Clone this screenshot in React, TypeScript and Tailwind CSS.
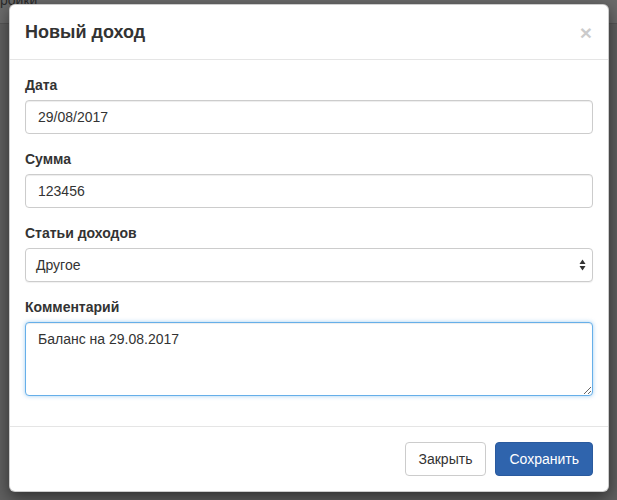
import React from "react";

const font = { fontFamily: '"Liberation Sans", Arial, sans-serif' };

function Field({ label, children }: { label: string; children: React.ReactNode }) {
  return (
    <div className="mb-[15px]">
      <label className="mb-[5px] block text-[14px] font-bold leading-[20px] text-[#333]">{label}</label>
      {children}
    </div>
  );
}

const inputCls =
  "block h-[34px] w-full rounded-[4px] border border-[#ccc] bg-white px-[12px] py-[6px] text-[14px] leading-[20px] text-[#333] shadow-[inset_0_1px_1px_rgba(0,0,0,0.075)] outline-none";

export default function App() {
  return (
    <div className="relative h-[500px] w-[617px] overflow-hidden bg-[#5f5f5f]" style={font}>
      {/* page behind the backdrop */}
      <div className="h-[24px] border-b border-[#555] bg-[#6a6a6a]">
        <span className="block -translate-y-[10px] text-[14px] leading-[20px] text-[#2a2a2a]">ройки</span>
      </div>

      {/* modal */}
      <div className="absolute left-[9px] top-[4px] w-[600px] rounded-[6px] border border-[rgba(0,0,0,0.2)] bg-white shadow-[0_5px_15px_rgba(0,0,0,0.5)]">
        <div className="flex items-center justify-between border-b border-[#e5e5e5] px-[15px] py-[15px]">
          <h4 className="text-[18px] font-bold leading-[24px] text-[#333]">Новый доход</h4>
          <button className="mr-[1px] text-[21px] font-bold leading-[21px] text-black opacity-20">×</button>
        </div>

        <div className="p-[15px]">
          <Field label="Дата">
            <input className={inputCls} readOnly value="29/08/2017" />
          </Field>
          <Field label="Сумма">
            <input className={inputCls} readOnly value="123456" />
          </Field>
          <Field label="Статьи доходов">
            <div className="flex h-[34px] w-full items-center justify-between rounded-[4px] border border-[#ccc] bg-white pl-[10px] pr-[6px] text-[14px] text-[#333] shadow-[0_1px_1px_rgba(0,0,0,0.06)]">
              <span>Другое</span>
              <svg width="7" height="12" viewBox="0 0 7 12" className="text-[#333]">
                <path d="M3.5 0.5 L6.5 5 L0.5 5 Z" fill="currentColor" />
                <path d="M3.5 11.5 L6.5 7 L0.5 7 Z" fill="currentColor" />
              </svg>
            </div>
          </Field>
          <Field label="Комментарий">
            <textarea
              readOnly
              rows={3}
              value="Баланс на 29.08.2017"
              className="block h-[74px] w-full resize-y rounded-[4px] border border-[#66afe9] bg-white px-[12px] py-[6px] text-[14px] leading-[20px] text-[#333] shadow-[inset_0_1px_1px_rgba(0,0,0,0.075),0_0_4px_rgba(102,175,233,0.6)] outline-none"
            />
          </Field>
        </div>

        <div className="flex justify-end gap-[9px] border-t border-[#e5e5e5] p-[15px]">
          <button className="h-[34px] rounded-[4px] border border-[#ccc] bg-white px-[13px] text-[14px] leading-[20px] text-[#333]">
            Закрыть
          </button>
          <button className="h-[34px] rounded-[4px] border border-[#2a5a9e] bg-[#2f64ad] px-[13px] text-[14px] leading-[20px] text-white">
            Сохранить
          </button>
        </div>
      </div>
    </div>
  );
}
